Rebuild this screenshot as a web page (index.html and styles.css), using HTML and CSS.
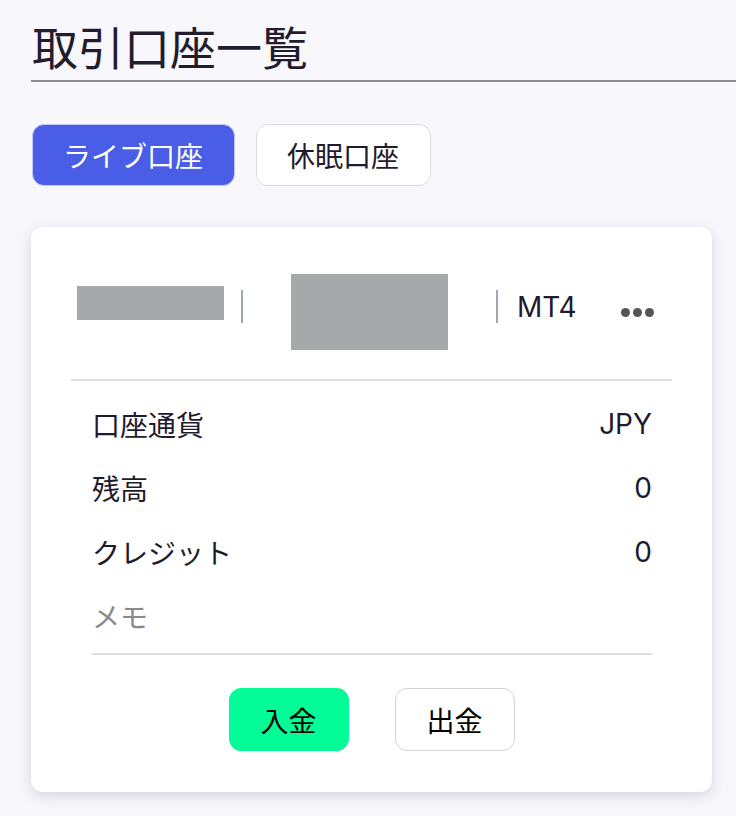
FILE: index.html
```html
<!DOCTYPE html>
<html lang="ja">
<head>
<meta charset="utf-8">
<link rel="stylesheet" href="styles.css">
</head>
<body>
<main class="page">
  <h1 class="title">取引口座一覧</h1>
  <div class="tabs">
    <button class="tab tab-active">ライブ口座</button>
    <button class="tab">休眠口座</button>
  </div>
  <section class="card">
    <div class="card-head">
      <span class="mask mask-short"></span>
      <span class="sep"></span>
      <span class="mask mask-tall"></span>
      <span class="sep"></span>
      <span class="platform">MT4</span>
      <span class="dots"><i></i><i></i><i></i></span>
    </div>
    <div class="rows">
      <div class="row"><span class="label">口座通貨</span><span class="value">JPY</span></div>
      <div class="row"><span class="label">残高</span><span class="value">0</span></div>
      <div class="row"><span class="label">クレジット</span><span class="value">0</span></div>
      <div class="row"><span class="label memo">メモ</span></div>
    </div>
    <div class="actions">
      <button class="act act-deposit">入金</button>
      <button class="act act-withdraw">出金</button>
    </div>
  </section>
</main>
</body>
</html>
```
FILE: styles.css
```css
html, body {
  margin: 0;
  padding: 0;
  background: #f7f7fc;
  font-family: "Noto Sans CJK JP", "Noto Sans", sans-serif;
  color: #1f1b2d;
}

.page {
  padding-left: 31px;
  padding-bottom: 40px;
}

.title {
  margin: 22px 0 0;
  font-size: 46px;
  font-weight: 400;
  line-height: 46px;
  padding: 0 0 12px 1px;
  border-bottom: 2px solid #8c8c91;
  color: #231c2c;
}

.tabs {
  display: flex;
  gap: 21px;
  margin-top: 42px;
  padding-left: 1px;
}

.tab {
  height: 62px;
  padding: 0 31px 0 30px;
  border-radius: 12px;
  border: 1.5px solid #dcdce0;
  background: #ffffff;
  font-family: inherit;
  font-size: 28px;
  line-height: 1;
  color: #1f1b2d;
}

.tab-active {
  background: #4a5de6;
  border-color: #c3c9f4;
  color: #ffffff;
}

.card {
  margin-top: 41px;
  width: 681px;
  box-sizing: border-box;
  background: #ffffff;
  border-radius: 12px;
  box-shadow: 0 4px 14px rgba(40, 40, 70, 0.16);
  padding: 0 40px 41px;
}

.card-head {
  display: flex;
  align-items: center;
  padding: 47px 6px 29px;
  border-bottom: 2px solid #dedede;
}

.mask {
  background: #a7a8aa;
  display: block;
}

.mask-short {
  width: 147px;
  height: 34px;
  margin-bottom: 18px;
}

.mask-tall {
  width: 157px;
  height: 76px;
  margin: 0 48px;
}

.sep {
  width: 2px;
  height: 33px;
  background: #a0a8b2;
  margin-left: 17px;
  margin-bottom: 12px;
}

.mask-tall + .sep {
  margin-left: 0;
}

.platform {
  margin-left: 19px;
  margin-bottom: 10px;
  font-family: "Inter", "Noto Sans CJK JP", sans-serif;
  font-size: 28px;
  line-height: 1;
  color: #1f1b2d;
}

.dots {
  display: flex;
  gap: 3px;
  margin-left: 44px;
}

.dots i {
  width: 9px;
  height: 9px;
  border-radius: 50%;
  background: #555558;
}

.rows {
  margin: 11px 20px 0 21px;
  border-bottom: 2px solid #dedede;
  padding-bottom: 5px;
}

.row {
  height: 64px;
  display: flex;
  align-items: center;
  justify-content: space-between;
  font-size: 28px;
}

.value {
  font-family: "Inter", "Noto Sans CJK JP", sans-serif;
  font-size: 28px;
}

.memo {
  color: #8a8a8a;
}

.actions {
  display: flex;
  justify-content: center;
  gap: 46px;
  margin-top: 33px;
}

.act {
  width: 120px;
  height: 63px;
  border-radius: 12px;
  font-family: inherit;
  font-size: 28px;
  color: #000000;
  border: 1.5px solid #d4d4d4;
  background: #ffffff;
}

.act-deposit {
  background: #03fc97;
  border-color: #03fc97;
}
```
